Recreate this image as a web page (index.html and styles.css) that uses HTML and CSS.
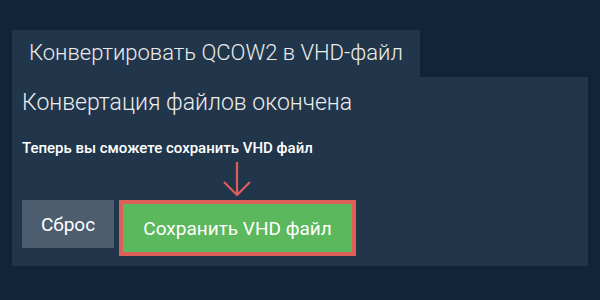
FILE: index.html
```html
<!DOCTYPE html>
<html lang="ru">
<head>
<meta charset="utf-8">
<link rel="stylesheet" href="styles.css">
</head>
<body>
<div class="wrap">
  <div class="tab">Конвертировать QCOW2 в VHD-файл</div>
  <div class="panel">
    <h2 class="heading">Конвертация файлов окончена</h2>
    <p class="sub">Теперь вы сможете сохранить VHD файл</p>
    <div class="actions">
      <button class="btn reset">Сброс</button>
      <div class="save-wrap">
        <svg class="arrow" width="30" height="36" viewBox="0 0 30 36">
          <path d="M15 1 V34 M2 21 L15 34 L28 21" fill="none" stroke="#dc5f5a" stroke-width="2.2"/>
        </svg>
        <button class="btn save">Сохранить VHD файл</button>
      </div>
    </div>
  </div>
</div>
</body>
</html>
```

FILE: styles.css
```css
html, body {
  margin: 0;
  padding: 0;
  background: #12243a;
  font-family: Roboto, "Noto Sans", sans-serif;
}
.wrap {
  padding: 30px 12px 0;
}
.tab {
  display: inline-block;
  box-sizing: border-box;
  width: 408px;
  height: 47px;
  line-height: 46px;
  padding: 0 17px;
  background: #22364b;
  color: #ececec;
  font-size: 22px;
  font-weight: 300;
  white-space: nowrap;
  vertical-align: top;
}
.panel {
  background: #22364b;
  padding: 11px 10px 10px;
  height: 189px;
  box-sizing: border-box;
}
.heading {
  margin: 0;
  font-size: 23px;
  font-weight: 300;
  line-height: 30px;
  color: #ececec;
}
.sub {
  margin: 20px 0 0;
  font-size: 15px;
  font-weight: 500;
  line-height: 20px;
  color: #ffffff;
}
.actions {
  display: flex;
  align-items: flex-start;
  gap: 5px;
  margin-top: 42px;
}
.btn {
  font-family: Roboto, "Noto Sans", sans-serif;
  font-size: 19px;
  font-weight: 400;
  color: #ffffff;
  border: none;
  margin: 0;
  cursor: pointer;
}
.reset {
  width: 92px;
  height: 48px;
  background: #4b5d6e;
  padding: 0;
}
.save-wrap {
  position: relative;
}
.save {
  display: block;
  width: 237px;
  height: 56px;
  background: #5cb85c;
  border: 4px solid #dc5f5a;
  padding: 0;
}
.arrow {
  position: absolute;
  left: 103px;
  bottom: 59px;
}
```
